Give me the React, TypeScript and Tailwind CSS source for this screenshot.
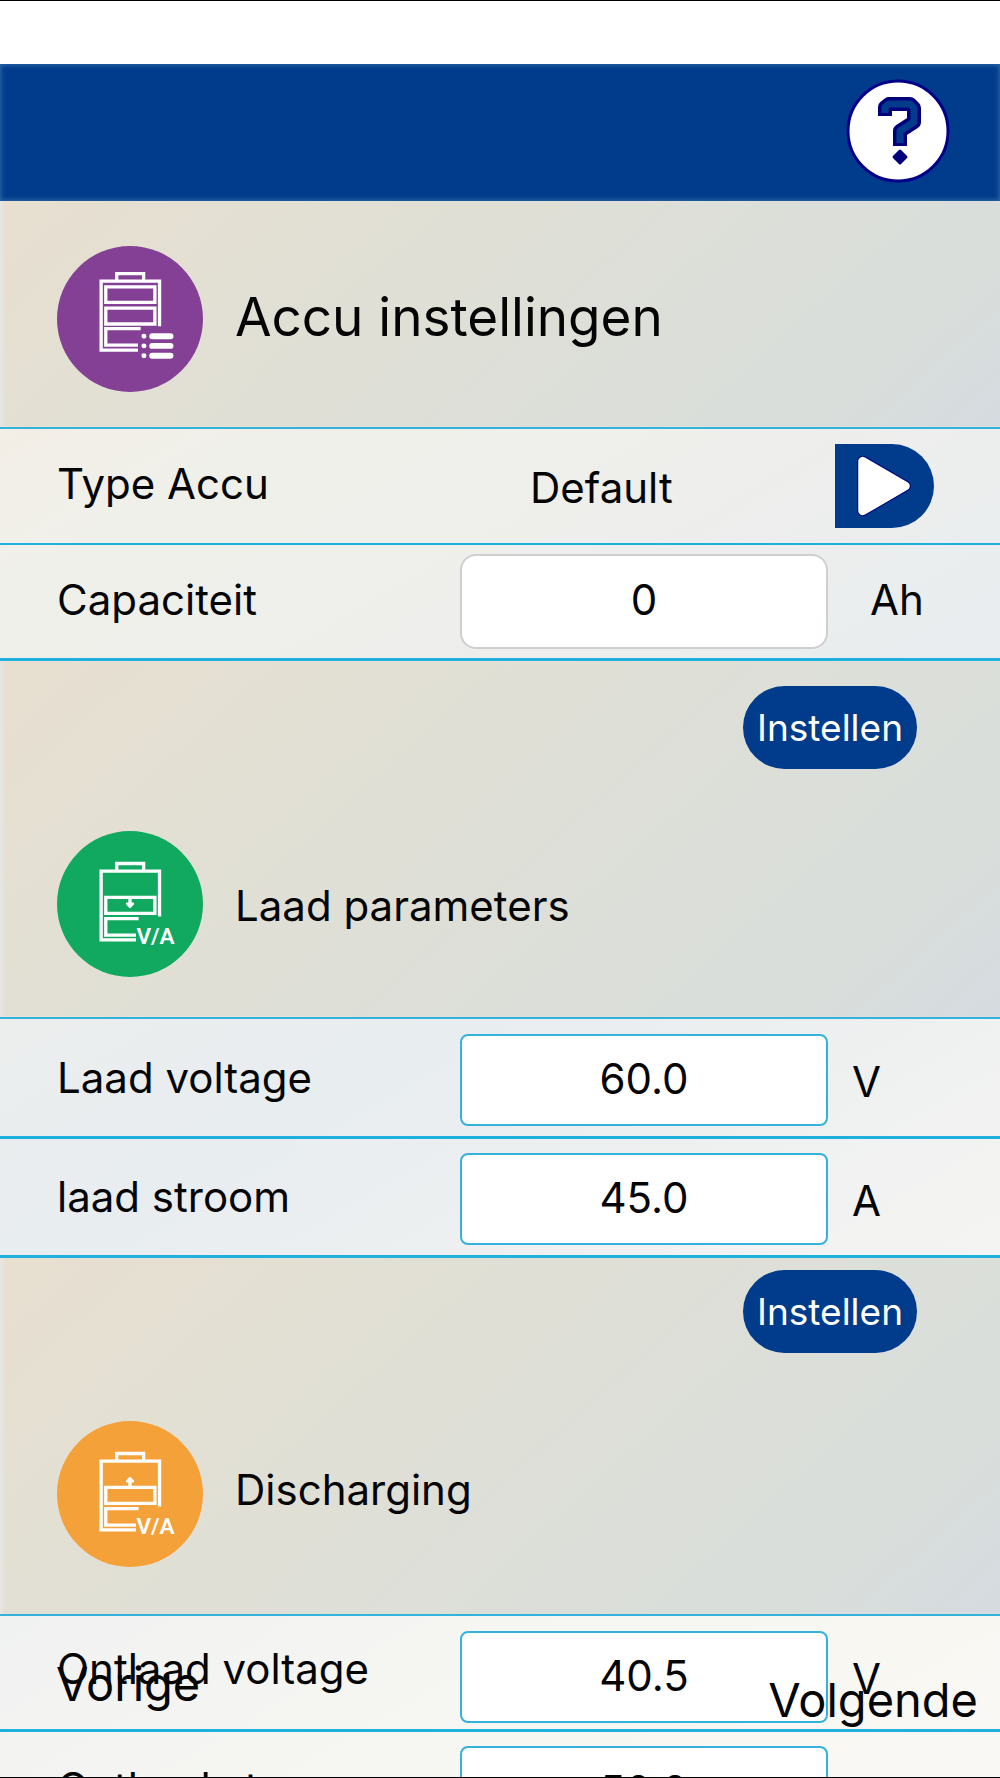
import React, { useId } from 'react';

// ─── Section icons ────────────────────────────────────────────────────────────
function SettingsIcon() {
  return (
    <svg viewBox="0 0 440 440" className="size-[146px] shrink-0" fill="none" stroke="white" strokeWidth="10" aria-hidden="true">
      <circle cx="220" cy="220" r="220" fill="#834094" stroke="none" />
      <path d="M180 106V83H261V106" />
      <path d="M309 242V106H133V314H244" />
      <path d="M147 123H295V170H147ZM147 187H295V235H147Z" />
      <path d="M252 249H147V299H244" />
      <path d="M287 272H342M287 301H342M287 331H342" strokeWidth="18" strokeLinecap="round" />
      <path d="M262 272h.1M262 301h.1M262 331h.1" strokeWidth="15" strokeLinecap="round" />
    </svg>
  );
}

function VoltAmpIcon({ color, charging }: { color: string; charging: boolean }) {
  return (
    <svg viewBox="0 0 440 440" className="size-[146px] shrink-0" fill="none" stroke="white" strokeWidth="10" aria-hidden="true">
      <circle cx="220" cy="220" r="220" fill={color} stroke="none" />
      <path d="M180 121V98H261V121" />
      <path d="M309 258V121H133V328H238" />
      <path d="M147 200H295V248H147Z" />
      <path d="M246 264H147V314H238" />
      {charging ? (
        <>
          <path d="M220 200V222" />
          <path d="M211 219H229L220 229Z" fill="white" strokeWidth="7" strokeLinejoin="round" />
        </>
      ) : (
        <>
          <path d="M220 200V178" />
          <path d="M211 182H229L220 172Z" fill="white" strokeWidth="7" strokeLinejoin="round" />
        </>
      )}
      <text x="297" y="342" textAnchor="middle" fill="white" stroke="none" className="font-['Roboto',sans-serif] text-[68px] font-semibold">
        V/A
      </text>
    </svg>
  );
}

function HelpIcon() {
  return (
    <svg viewBox="0 0 104 104" className="size-[104px]" fill="none" aria-hidden="true">
      <circle cx="52" cy="52" r="50" fill="white" stroke="#00008b" strokeWidth="3" />
      <path d="M39 37V28L43 25H64L68 29V43L54 52V67" stroke="#00007d" strokeWidth="14" strokeLinejoin="round" />
      <path d="M39 34V28L43 25H64L68 29V43L54 52V64" stroke="#003c8b" strokeWidth="7" strokeLinejoin="round" />
      <path d="M54 72L60 78L54 84L48 78Z" fill="#00007d" stroke="#00007d" strokeWidth="3" strokeLinejoin="round" />
    </svg>
  );
}

// ─── Section header ───────────────────────────────────────────────────────────
const sectionClass =
  'border-b-2 border-[#35b2dc] px-[57px] bg-[linear-gradient(138deg,#e8dfd0_0%,#e3e0d3_22%,#dedfd7_50%,#d9dedb_85%,#d5dbe0_100%)] shadow-[inset_4px_0_3px_-1px_#e6e6e4]';

function SetButton() {
  return (
    <button type="button" className="mr-[26px] h-[83px] w-[174px] rounded-full bg-[#003c8b] text-[37px] text-white">
      Instellen
    </button>
  );
}

// ─── Parameter row ────────────────────────────────────────────────────────────
const rowClass = 'grid grid-cols-[46%_36.8%_1fr] items-center border-[#1fb0de]';

type RowProps = { label: string; value: string; unit: string; className: string; labelClass?: string };

function ParamRow({ label, value, unit, className, labelClass = 'pb-1' }: RowProps) {
  const id = useId();
  return (
    <div className={`${rowClass} border-b-3 ${className}`}>
      <label htmlFor={id} className={`pl-[57px] ${labelClass}`}>{label}</label>
      <input
        id={id}
        defaultValue={value}
        inputMode="decimal"
        className="h-[92px] w-full rounded-lg border-2 border-[#35b2dc] bg-white pb-1 text-center"
      />
      <span className="pt-1 pl-6">{unit}</span>
    </div>
  );
}

export default function App() {
  return (
    <div className="relative flex h-screen flex-col overflow-hidden border-y border-black bg-white font-['Inter',sans-serif] text-[42px] leading-[52px] text-[#050505]">
      <header className="mt-[63px] flex h-[137px] shrink-0 items-center justify-end bg-[#003c8b] pr-[50px] pb-1 shadow-[inset_0_0_5px_1px_#3068a5]">
        <button type="button" aria-label="Help">
          <HelpIcon />
        </button>
      </header>

      <main className="flex-1 overflow-hidden bg-[linear-gradient(150deg,#f3eee6_10%,#f0f0ea_18%,#eeeeec_32%,#e8edf0_50%,#eef0f0_62%,#f3f3f2_72%,#f7f7f2_86%,#faf8f4_100%)]">
        {/* Battery settings */}
        <section className={`flex items-center gap-8 pt-[45px] pb-[35px] ${sectionClass}`}>
          <SettingsIcon />
          <h1 className="pb-1 text-[53px]">Accu instellingen</h1>
        </section>
        <div className={`${rowClass} h-[116px] border-b-2`}>
          <span className="pb-1 pl-[57px]">Type Accu</span>
          <span className="pt-1 pl-[70px]">Default</span>
          <button type="button" aria-label="Kies type accu" className="ml-[7px] h-[84px] w-[99px] rounded-r-full bg-[#003c8b]">
            <svg viewBox="0 0 100 84" className="size-full">
              <path d="M28 17V67L71 42Z" fill="white" stroke="#00007d" strokeWidth="11" strokeLinejoin="round" />
              <path d="M28 17V67L71 42Z" fill="white" stroke="white" strokeWidth="9" strokeLinejoin="round" />
            </svg>
          </button>
        </div>
        <div className={`${rowClass} h-[116px] border-b-3`}>
          <label htmlFor="capacity" className="pb-1 pl-[57px]">Capaciteit</label>
          <input
            id="capacity"
            defaultValue="0"
            inputMode="numeric"
            className="h-[95px] w-full rounded-2xl border-2 border-[#cfcfcf] bg-white pb-1 text-center"
          />
          <span className="pb-1 pl-[42px]">Ah</span>
        </div>

        {/* Charge parameters */}
        <section className={`pt-[25px] pb-10 ${sectionClass}`}>
          <div className="flex justify-end">
            <SetButton />
          </div>
          <div className="mt-[62px] flex items-center gap-8">
            <VoltAmpIcon color="#10a95f" charging />
            <h2 className="pt-1">Laad parameters</h2>
          </div>
        </section>
        <ParamRow label="Laad voltage" value="60.0" unit="V" className="pt-[15px] pb-[10px]" />
        <ParamRow label="laad stroom" value="45.0" unit="A" className="pt-[14px] pb-[10px]" />

        {/* Discharge parameters */}
        <section className={`pt-[12px] pb-[47px] ${sectionClass}`}>
          <div className="flex justify-end">
            <SetButton />
          </div>
          <div className="mt-[68px] flex items-center gap-8">
            <VoltAmpIcon color="#f5a13a" charging={false} />
            <h2 className="pb-2">Discharging</h2>
          </div>
        </section>
        <ParamRow label="Ontlaad voltage" value="40.5" unit="V" className="pt-[15px] pb-[6px]" labelClass="pb-4" />
        <ParamRow label="Ontlaad stroom" value="50.0" unit="A" className="pt-[14px] pb-[6px]" labelClass="pb-2" />
      </main>

      {/* Pager floats over the list */}
      <nav className="absolute inset-x-0 bottom-0 flex items-start justify-between pr-[22px] pb-12 pl-14 text-[47px] leading-[58px]">
        <button type="button">Vorige</button>
        <button type="button" className="pt-4">Volgende</button>
      </nav>
    </div>
  );
}
